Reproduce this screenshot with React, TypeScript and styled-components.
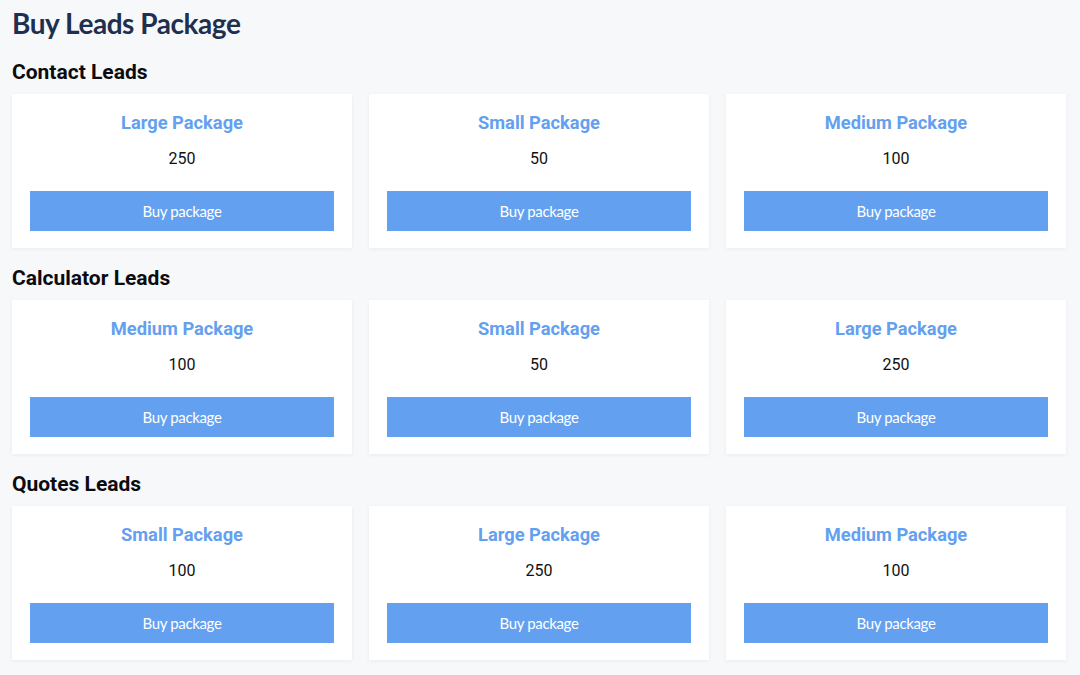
import React from "react";
import styled, { createGlobalStyle } from "styled-components";

const Global = createGlobalStyle`
  html, body { margin: 0; padding: 0; background: #f7f8fa; }
  body { font-family: Roboto, "Liberation Sans", sans-serif; }
  * { box-sizing: border-box; }
`;

const Page = styled.div`
  padding: 6px 14px 12px 12px;
  display: flex;
  flex-direction: column;
`;

const Title = styled.h1`
  margin: 0 0 20px 0;
  font-family: Lato, "Noto Sans", sans-serif;
  font-size: 28px;
  line-height: 34px;
  font-weight: 700;
  letter-spacing: -0.45px;
  color: #1e3050;
`;

const Section = styled.section`
  display: flex;
  flex-direction: column;
  gap: 10px;
  margin-bottom: 18px;
`;

const SectionTitle = styled.h2`
  margin: 0;
  font-size: 21px;
  line-height: 24px;
  font-weight: 700;
  color: #0c0c10;
`;

const Grid = styled.div`
  display: grid;
  grid-template-columns: repeat(3, 340px);
  gap: 17px;
`;

const Card = styled.div`
  background: #ffffff;
  box-shadow: 0 1px 4px rgba(20, 30, 60, 0.06);
  padding: 17px 18px 17px;
  display: flex;
  flex-direction: column;
  align-items: center;
`;

const CardTitle = styled.div`
  font-size: 18.3px;
  line-height: 24px;
  font-weight: 700;
  color: #64a0f0;
`;

const Amount = styled.div`
  margin-top: 14px;
  font-size: 16px;
  line-height: 20px;
  color: #111;
`;

const BuyButton = styled.button`
  margin-top: 22px;
  width: 100%;
  height: 40px;
  border: none;
  background: #64a0f0;
  color: #ffffff;
  font-family: Lato, "Noto Sans", sans-serif;
  font-size: 15px;
  letter-spacing: -0.35px;
  cursor: pointer;
`;

type Pkg = { name: string; amount: number };

const sections: { title: string; items: Pkg[] }[] = [
  {
    title: "Contact Leads",
    items: [
      { name: "Large Package", amount: 250 },
      { name: "Small Package", amount: 50 },
      { name: "Medium Package", amount: 100 },
    ],
  },
  {
    title: "Calculator Leads",
    items: [
      { name: "Medium Package", amount: 100 },
      { name: "Small Package", amount: 50 },
      { name: "Large Package", amount: 250 },
    ],
  },
  {
    title: "Quotes Leads",
    items: [
      { name: "Small Package", amount: 100 },
      { name: "Large Package", amount: 250 },
      { name: "Medium Package", amount: 100 },
    ],
  },
];

export default function App() {
  return (
    <>
      <Global />
      <Page>
        <Title>Buy Leads Package</Title>
        {sections.map((s) => (
          <Section key={s.title}>
            <SectionTitle>{s.title}</SectionTitle>
            <Grid>
              {s.items.map((p, i) => (
                <Card key={i}>
                  <CardTitle>{p.name}</CardTitle>
                  <Amount>{p.amount}</Amount>
                  <BuyButton>Buy package</BuyButton>
                </Card>
              ))}
            </Grid>
          </Section>
        ))}
      </Page>
    </>
  );
}
